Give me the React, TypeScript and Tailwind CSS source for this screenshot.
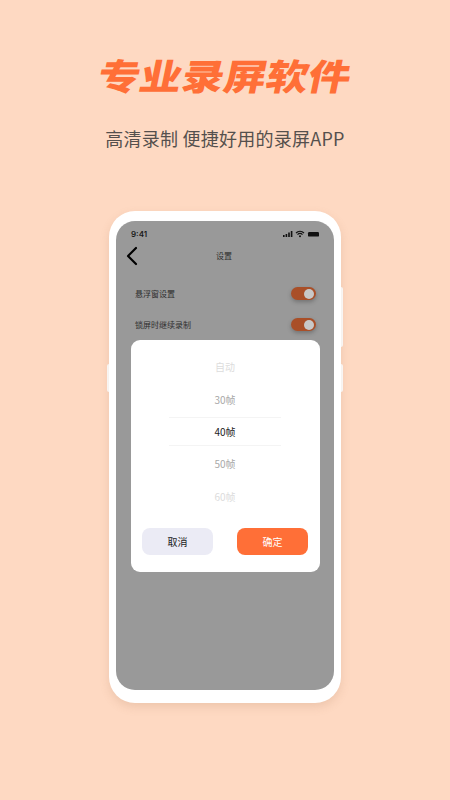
import { ChevronLeft } from "lucide-react";

const cjk = "font-['Noto_Sans_CJK_SC','Noto_Sans',sans-serif]";

function Toggle() {
  return (
    <div className="flex h-[13px] w-[25px] items-center justify-end rounded-full bg-[#a94f28] pr-[2px] shadow-[0_2px_4px_rgba(0,0,0,0.25)]">
      <div className="h-[10px] w-[10px] rounded-full bg-[#c8c8c8]" />
    </div>
  );
}

function StatusBar() {
  return (
    <div className="flex items-center justify-between px-[15px] pt-[8px]">
      <span className="font-['Inter',sans-serif] text-[8px] font-semibold leading-[10px] text-[#1a1a1a]">9:41</span>
      <svg width="36" height="8" viewBox="0 0 36 8" fill="#111">
        <rect x="0" y="5" width="1.6" height="2" />
        <rect x="2.6" y="4" width="1.6" height="3" />
        <rect x="5.2" y="2.5" width="1.6" height="4.5" />
        <rect x="7.8" y="1" width="1.6" height="6" />
        <path d="M13 3 a6 6 0 0 1 8 0 M14.5 4.6 a3.6 3.6 0 0 1 5 0" fill="none" stroke="#111" strokeWidth="1.2" />
        <circle cx="17" cy="6.2" r="1" />
        <rect x="25" y="2" width="11" height="4.6" rx="1.2" />
      </svg>
    </div>
  );
}

function Row({ label, className }: { label: string; className: string }) {
  return (
    <div className={`flex items-center justify-between pl-[19px] pr-[18px] ${className}`}>
      <span className="-translate-y-[0.5px] text-[8px] leading-[12px] text-[#2e2e2e]">{label}</span>
      <Toggle />
    </div>
  );
}

function Dialog() {
  return (
    <div className="absolute left-[14.5px] top-[118.5px] flex h-[232px] w-[189px] flex-col rounded-[9px] bg-white px-[11.5px] pt-[10.5px]">
      <div className="flex flex-col items-center text-[10px]">
        <div className="flex h-[33px] items-center text-[#dcdcdc]">自动</div>
        <div className="flex h-[34px] items-center pb-[2px] text-[#a8a8a8]">30帧</div>
        <div className="flex h-[29px] w-[112px] items-center justify-center border-y border-[#f4f4f4] text-[#222]">40帧</div>
        <div className="flex h-[35px] items-center text-[#a8a8a8]">50帧</div>
        <div className="flex h-[31px] items-center text-[#dcdcdc]">60帧</div>
      </div>
      <div className="mt-[16px] flex justify-between text-[10px]">
        <button className="h-[27px] w-[71px] rounded-[8px] bg-[#ebebf5] text-[#222]">取消</button>
        <button className="h-[27px] w-[71px] rounded-[8px] bg-[#ff6f37] text-white">确定</button>
      </div>
    </div>
  );
}

export default function App() {
  return (
    <div className={`flex h-[800px] w-[450px] flex-col items-center overflow-hidden bg-[#fed9c2] ${cjk}`}>
      <h1 className="mt-[50px] -skew-x-[10deg] scale-x-[1.08] scale-y-[0.92] text-[39px] font-black leading-[48px] text-[#ff6f37]">专业录屏软件</h1>
      <p className="mt-[28px] text-[18px] leading-[24px] tracking-[0.25px] text-[#55504d]">高清录制 便捷好用的录屏APP</p>

      <div className="relative mt-[61px]">
        {/* side buttons */}
        <div className="absolute right-[-2px] top-[76px] h-[60px] w-[4px] rounded-r-[2px] bg-white" />
        <div className="absolute right-[-2px] top-[153px] h-[28px] w-[4px] rounded-r-[2px] bg-white" />
        <div className="absolute left-[-2px] top-[153px] h-[28px] w-[4px] rounded-l-[2px] bg-white" />

        <div className="relative h-[492px] w-[232px] rounded-[26px] bg-white px-[7px] pt-[10px] shadow-[0_4px_10px_rgba(160,110,80,0.18)]">
          <div className="relative h-[469px] w-[218px] overflow-hidden rounded-[19px] bg-[#999999]">
            <StatusBar />
            <div className="relative mt-[5px] flex h-[24px] items-center justify-center">
              <ChevronLeft className="absolute left-0 top-[-4px] h-[32px] w-[32px] text-black" strokeWidth={1.6} />
              <span className="-translate-x-[1px] text-[8px] leading-[12px] text-[#2e2e2e]">设置</span>
            </div>
            <Row label="悬浮窗设置" className="mt-[19px]" />
            <Row label="锁屏时继续录制" className="mt-[18px]" />
            <Dialog />
          </div>
        </div>
      </div>
    </div>
  );
}
